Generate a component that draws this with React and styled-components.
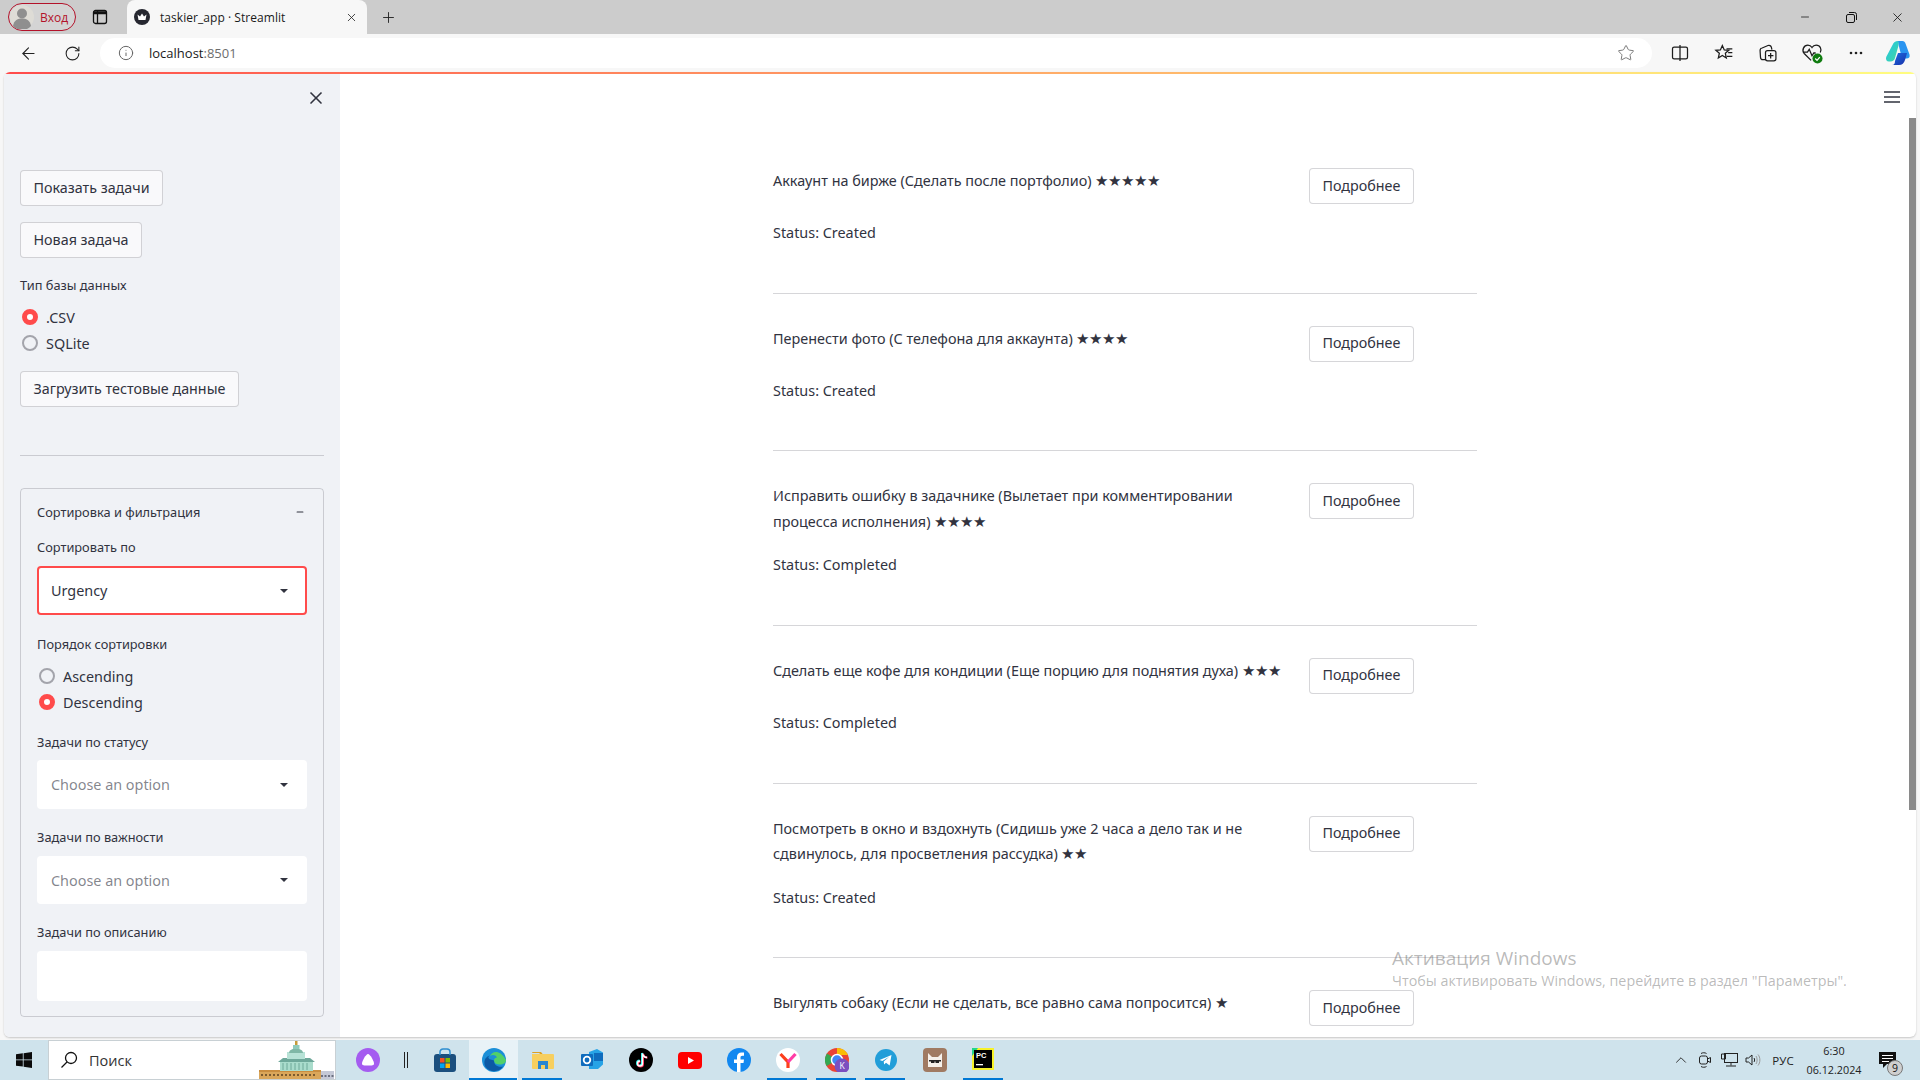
import React from "react";
import styled, { createGlobalStyle } from "styled-components";
import { X, Plus, ArrowLeft, RotateCw, Info, Star, Minus, ChevronUp } from "lucide-react";

const Global = createGlobalStyle`
  html, body { margin: 0; padding: 0; overflow: hidden; }
  body { font-family: "Noto Sans", "Liberation Sans", sans-serif; color: #31333f; }
  * { box-sizing: border-box; }
`;
const Shell = styled.div`position: relative; width: 1920px; height: 1080px; display: flex; flex-direction: column; overflow: hidden; background: #f7f7f7;`;
const TitleBar = styled.div`height: 34px; flex: none; background: #ccc; display: flex; align-items: flex-end; padding-left: 8px;`;
const Profile = styled.div`width: 68px; height: 28px; margin-bottom: 3px; border: 1px solid #b3122a; border-radius: 14px; display: flex; align-items: center; gap: 6px; padding-left: 1px; font: 12px "Open Sans", sans-serif; color: #b3122a; background: #d4d4d4;`;
const Avatar = styled.svg`width: 24px; height: 24px; flex: none;`;
const TabActions = styled.div`width: 51px; height: 34px; display: flex; align-items: center; justify-content: center; padding-right: 3px;`;
const Tab = styled.div`width: 240px; height: 34px; background: #f7f7f7; border-radius: 8px 8px 0 0; display: flex; align-items: center; padding: 0 9px 0 7px; font: 12px "Open Sans", sans-serif; color: #1a1a1a;`;
const Favicon = styled.svg`width: 16px; height: 16px; flex: none; margin-right: 10px;`;
const TabTitle = styled.span`flex: 1; letter-spacing: .05px;`;
const NewTab = styled.div`width: 42px; height: 34px; display: flex; align-items: center; justify-content: center;`;
const Spring = styled.div`flex: 1;`;
const WinControls = styled.div`display: flex; height: 34px; align-items: center;`;
const WinBtn = styled.div`width: 46px; height: 34px; display: flex; align-items: center; justify-content: center;`;

const Toolbar = styled.div`height: 38px; flex: none; background: #f7f7f7; display: flex; align-items: center; padding-left: 6px;`;
const ToolBtn = styled.div`width: ${p => p.$w || 44}px; height: 32px; display: flex; align-items: center; justify-content: center; flex: none;`;
const Address = styled.div`width: 1552px; height: 30px; margin-left: 6px; margin-right: 6px; background: #fff; border-radius: 15px; display: flex; align-items: center; padding: 0 17px 0 18px; font: 13px "Open Sans", sans-serif; color: #1a1a1a;`;
const Url = styled.span`margin-left: 15px; flex: 1; b { font-weight: 400; color: #6d6d6d; }`;

const Viewport = styled.div`flex: 1; padding: 0 4px 3px 4px; min-height: 0;`;
const Page = styled.div`height: 100%; display: flex; flex-direction: column; background: #fff; border-radius: 6px; overflow: hidden; box-shadow: 0 1px 2px rgba(0,0,0,.2);`;
const Decoration = styled.div`height: 2px; flex: none; background: linear-gradient(90deg, #ff4b4b, #fffd80);`;
const Body = styled.div`position: relative; flex: 1; min-height: 0; display: flex;`;

const Sidebar = styled.aside`width: 336px; flex: none; background: #f0f2f6; padding: 0 16px; display: flex; flex-direction: column; overflow: hidden;`;
const SideHead = styled.div`height: 96px; flex: none; display: flex; justify-content: flex-end; padding-top: 14px; margin-right: -2px;`;
const StButton = styled.div`display: inline-flex; align-self: flex-start; align-items: center; height: 36px; padding: 0 12.5px 2px; flex: none; border: 1px solid rgba(49,51,63,.2); border-radius: 4px; background: ${p => p.$plain ? "#fff" : "#f9f9fb"}; font-size: 14.3px; white-space: nowrap; margin-top: ${p => p.$mt || 0}px;`;
const FieldLabel = styled.div`font-size: 12.8px; line-height: 20px; height: 20px; flex: none; margin-top: ${p => p.$mt || 0}px; white-space: nowrap;`;
const RadioGroup = styled.div`flex: none; margin-top: ${p => p.$mt || 0}px; display: flex; flex-direction: column;`;
const RadioRow = styled.div`height: 26px; display: flex; align-items: center; gap: 8px; padding-left: 2px; font-size: 14.4px;`;
const Dot = styled.span`width: 16px; height: 16px; border-radius: 50%; flex: none; background: ${p => p.$on ? "#fff" : "#f0f2f6"}; border: ${p => p.$on ? "5px solid #ff4b4b" : "2px solid #a3a4ab"};`;
const Rule = styled.div`height: 1px; flex: none; background: rgba(49,51,63,.2); margin-top: ${p => p.$mt || 0}px;`;
const Expander = styled.section`height: 529px; flex: none; margin-top: 32px; border: 1px solid rgba(49,51,63,.2); border-radius: 4px; padding: 0 16px; display: flex; flex-direction: column; overflow: hidden;`;
const ExpHead = styled.div`height: 46px; flex: none; display: flex; align-items: center; justify-content: space-between; font-size: 12.8px; padding-right: 2px;`;
const Select = styled.div`height: ${p => p.$h || 49}px; flex: none; margin-top: ${p => p.$mt ?? 9}px; background: #fff; border-radius: 4px; border: ${p => p.$focus ? "2px solid #ff4b4b" : "none"}; display: flex; align-items: center; justify-content: space-between; padding: 0 ${p => p.$focus ? 17 : 19}px 0 ${p => p.$focus ? 12 : 14}px; font-size: 14.4px; color: ${p => p.$muted ? "rgba(49,51,63,.6)" : "#31333f"};`;
const Caret = styled.span`width: 0; height: 0; border-left: 4px solid transparent; border-right: 4px solid transparent; border-top: 4px solid #31333f;`;
const TextBox = styled.div`height: 50px; flex: none; margin-top: 9px; background: #fff; border-radius: 4px;`;

const Main = styled.main`flex: 1; min-width: 0; padding: 94px 0 0 433px; overflow: hidden;`;
const List = styled.div`width: 704px; display: flex; flex-direction: column;`;
const Item = styled.article`display: flex; flex-direction: column; gap: 16px; flex: none;`;
const ItemTop = styled.div`display: grid; grid-template-columns: 536px auto; justify-content: start;`;
const ItemText = styled.p`margin: 0; padding-bottom: 2px; font-size: 14.4px; line-height: 25.6px; white-space: nowrap;`;
const Stars = styled.span`font-size: 15px;`;
const StatusLine = styled.p`margin: 0; font-size: 14.4px; line-height: 25.6px;`;
const Divider = styled.hr`height: 1px; margin: 47px 0 32px; border: none; background: rgba(49,51,63,.2); flex: none;`;
const Burger = styled.svg`position: absolute; top: 16px; right: 15px; width: 18px; height: 14px;`;
const ScrollThumb = styled.div`position: absolute; right: 0; top: 44px; width: 7px; height: 692px; background: #8a8a8a;`;

const Taskbar = styled.footer`height: 40px; flex: none; background: #cfe3ec; display: flex; align-items: center;`;
const Start = styled.div`width: 48px; height: 40px; display: flex; align-items: center; justify-content: center;`;
const SearchBox = styled.div`width: 288px; height: 40px; background: #fff; border: 1px solid #c8d0d4; display: flex; align-items: center; padding-left: 11px; gap: 11px; font: 14.5px "Open Sans", sans-serif; color: #333; overflow: hidden;`;
const SearchArt = styled.svg`margin-left: auto; width: 76px; height: 39px; flex: none;`;
const Slots = styled.div`display: flex; margin-left: 7px;`;
const Slot = styled.div`position: relative; width: ${p => p.$w || 49}px; height: 40px; display: flex; align-items: center; justify-content: center; flex: none; background: ${p => p.$active ? "#e8f2f7" : "transparent"}; &::after { content: ""; position: absolute; bottom: 0; left: ${p => p.$active ? 0 : 4}px; right: ${p => p.$active ? 1 : 5}px; height: 2px; background: ${p => p.$run || p.$active ? "#0078d4" : "transparent"}; }`;
const Tray = styled.div`margin-left: auto; display: flex; align-items: center; height: 40px; padding-right: 15px; font: 12px "Open Sans", sans-serif; color: #222;`;
const TrayIcon = styled.div`width: ${p => p.$w || 24}px; height: 40px; display: flex; align-items: center; justify-content: center; flex: none;`;
const Lang = styled.div`width: 38px; text-align: center; font-size: 11.5px; margin-left: -1px;`;
const Clock = styled.div`width: 62px; margin-left: 1px; text-align: center; line-height: 19px; font-size: 10.8px;`;
const Notify = styled.div`position: relative; width: 36px; height: 40px; margin-left: 4px; display: flex; align-items: center; justify-content: center;`;
const Badge = styled.span`position: absolute; left: 18px; top: 20px; width: 16px; height: 16px; border-radius: 50%; background: #cfcfcf; border: 1px solid #777; font-size: 10.5px; line-height: 14px; text-align: center; color: #111;`;
const Watermark = styled.div`position: absolute; left: 1392px; top: 945px; font-family: "Open Sans", sans-serif; color: rgba(90,90,90,.42); pointer-events: none; white-space: nowrap;`;
const WmTitle = styled.div`font-size: 19px; line-height: 27px;`;
const WmSub = styled.div`font-size: 14.3px; line-height: 18px;`;

const Ic = ({ s = 20, children, ...r }) => <svg width={s} height={s} viewBox="0 0 24 24" fill="none" stroke="#1c1c1c" strokeWidth="1.5" {...r}>{children}</svg>;

const Split = () => <Ic><rect x="3" y="5" width="18" height="14" rx="2"/><path d="M12 2.5v19"/></Ic>;
const Favs = () => <Ic><path d="M10 3l2.3 5.3 5.5.5-4.2 3.6 1.2 5.6L10 15l-4.8 3 1.2-5.6-4.2-3.6 5.5-.5z"/><path d="M15 7h7M17 11.5h5M15.5 16h6.5"/></Ic>;
const Coll = () => <Ic><path d="M9 20H6a3 3 0 0 1-3-3l-.5-8A3 3 0 0 1 5 6l7-3a3 3 0 0 1 4 2l.7 3"/><rect x="9" y="9" width="12.5" height="12.5" rx="2.5" fill="#f7f7f7"/><path d="M15.2 12v6.5M12 15.2h6.5"/></Ic>;
const Health = () => <svg width="22" height="22" viewBox="0 0 24 24" fill="none" stroke="#1c1c1c" strokeWidth="1.4"><path d="M11 20L3.5 12.5C.5 9 3 3.5 7.5 3.5c2 0 3.5 1 4.5 2.5 1-1.5 2.5-2.5 4.5-2.5 4.5 0 6.5 4.5 4.5 8"/><path d="M2 11h5l2-3 3 7 2-3h2"/><circle cx="18" cy="18" r="5.5" fill="#107c10" stroke="none"/><path d="M15.5 18l2 2 3-3.5" stroke="#fff"/></svg>;
const Copilot = () => <svg width="26" height="26" viewBox="0 0 26 26"><defs><linearGradient id="cpa" x1="0" y1="0" x2="1" y2="1"><stop offset="0" stopColor="#21c6e8"/><stop offset="1" stopColor="#43d6a0"/></linearGradient><linearGradient id="cpb" x1="0" y1="0" x2="1" y2="1"><stop offset="0" stopColor="#1c6fe4"/><stop offset="1" stopColor="#1a2fa8"/></linearGradient></defs><path d="M13 1h4.5c1.5 0 2.5 1 3 2.5l4 11c.7 2.5-.5 4-3 4H17l-3-12C13.5 4 13 2 13 1z" fill="#2a94f0"/><path d="M7.5 5C8.5 2.5 10.5 1 13 1c1 1 .7 3 .4 5L10 18c-.6 2-2 3.5-4.5 3.5H4C1.5 21.5.5 19.5 1.2 17z" fill="url(#cpa)"/><path d="M10 21l3-8h9l-2 7c-.8 3-3 5-6 5H7c2.5 0 3-2 3-4z" fill="url(#cpb)"/></svg>;

const Building = () => (
  <SearchArt viewBox="0 0 76 39">
    <rect x="0" y="30" width="62" height="9" fill="#d9a65a"/>
    <rect x="0" y="29" width="62" height="2" fill="#c98d3f"/>
    <path d="M2 34h56" stroke="#7a5a30" strokeDasharray="2 2" strokeWidth="2"/>
    <rect x="62" y="30" width="13" height="9" fill="#c5c9d6"/>
    <path d="M62 35h13" stroke="#6c7080" strokeDasharray="2 1.5" strokeWidth="2"/>
    <rect x="21" y="20" width="33" height="10" fill="#a9dccc"/>
    <path d="M19 21h37l-5-4H24z" fill="#6ea89a"/>
    <rect x="28" y="11" width="18" height="7" fill="#b7e2d6"/>
    <path d="M30 12c0-6 14-6 14 0z" fill="#7fb7a6"/>
    <rect x="36" y="0" width="2.5" height="5" fill="#c69b3a"/>
    <rect x="34" y="4" width="6.5" height="4" fill="#8fcabb"/>
    <path d="M24 22v7M28 22v7M32 22v7M36 22v7M40 22v7M44 22v7M48 22v7" stroke="#5f9c8e" strokeWidth=".8"/>
  </SearchArt>
);
const T = ({ s = 24, children }) => <svg width={s} height={s} viewBox="0 0 24 24">{children}</svg>;

const Items = [
  { lines: ["Аккаунт на бирже (Сделать после портфолио) "], stars: "★★★★★", status: "Created" },
  { lines: ["Перенести фото (С телефона для аккаунта) "], stars: "★★★★", status: "Created" },
  { lines: ["Исправить ошибку в задачнике (Вылетает при комментировании", "процесса исполнения) "], stars: "★★★★", status: "Completed" },
  { lines: ["Сделать еще кофе для кондиции (Еще порцию для поднятия духа) "], stars: "★★★", status: "Completed" },
  { lines: ["Посмотреть в окно и вздохнуть (Сидишь уже 2 часа а дело так и не", "сдвинулось, для просветления рассудка) "], stars: "★★", status: "Created" },
  { lines: ["Выгулять собаку (Если не сделать, все равно сама попросится) "], stars: "★" },
];

export default function App() {
  return (
    <Shell>
      <Global />
      <TitleBar>
        <Profile>
          <Avatar viewBox="0 0 24 24"><circle cx="12" cy="12" r="12" fill="#dedcd6"/><circle cx="12" cy="8.5" r="5" fill="#8f8f8f"/><path d="M3 21c1-6 5-7.5 9-7.5s8 1.5 9 7.5a12 12 0 0 1-18 0z" fill="#8f8f8f"/></Avatar>
          Вход
        </Profile>
        <TabActions>
          <svg width="16" height="16" viewBox="0 0 16 16" fill="none" stroke="#111" strokeWidth="1.3"><rect x="1.5" y="1.5" width="13" height="13" rx="2"/><path d="M5.5 2v12"/><path d="M2 3h12v1.5H2z" fill="#111"/></svg>
        </TabActions>
        <Tab>
          <Favicon viewBox="0 0 16 16"><circle cx="8" cy="8" r="8" fill="#262730"/><path d="M3.5 5.5l2.5 2L8 4.5l2 3 2.5-2-1 5.5h-7z" fill="#fff"/></Favicon>
          <TabTitle>taskier_app · Streamlit</TabTitle>
          <X size={13} color="#222" strokeWidth={1.5} />
        </Tab>
        <NewTab><Plus size={17} color="#222" strokeWidth={1.3} /></NewTab>
        <Spring />
        <WinControls>
          <WinBtn><Minus size={12} color="#111" strokeWidth={1.5} /></WinBtn>
          <WinBtn><svg width="11" height="11" viewBox="0 0 11 11" fill="none" stroke="#111"><rect x=".5" y="2.5" width="8" height="8" rx="1.5"/><path d="M3 .5h5.5a2 2 0 0 1 2 2V8"/></svg></WinBtn>
          <WinBtn><X size={15} color="#111" strokeWidth={1.3} /></WinBtn>
        </WinControls>
      </TitleBar>

      <Toolbar>
        <ToolBtn><ArrowLeft size={19} color="#222" strokeWidth={1.4} /></ToolBtn>
        <ToolBtn><RotateCw size={17} color="#222" strokeWidth={1.5} /></ToolBtn>
        <Address>
          <Info size={16} color="#666" strokeWidth={1.5} />
          <Url>localhost<b>:8501</b></Url>
          <Star size={18} color="#777" strokeWidth={1.3} />
        </Address>
        <ToolBtn><Split /></ToolBtn>
        <ToolBtn><Favs /></ToolBtn>
        <ToolBtn><Coll /></ToolBtn>
        <ToolBtn><Health /></ToolBtn>
        <ToolBtn><svg width="14" height="4" viewBox="0 0 14 4" fill="#222"><circle cx="2" cy="2" r="1.3"/><circle cx="7" cy="2" r="1.3"/><circle cx="12" cy="2" r="1.3"/></svg></ToolBtn>
        <ToolBtn $w={40}><Copilot /></ToolBtn>
      </Toolbar>

      <Viewport>
        <Page>
          <Decoration />
          <Body>
            <Sidebar>
              <SideHead><X size={20} color="#31333f" strokeWidth={2} /></SideHead>
              <StButton>Показать задачи</StButton>
              <StButton $mt={16}>Новая задача</StButton>
              <FieldLabel $mt={17}>Тип базы данных</FieldLabel>
              <RadioGroup $mt={9}>
                <RadioRow><Dot $on />.CSV</RadioRow>
                <RadioRow><Dot />SQLite</RadioRow>
              </RadioGroup>
              <StButton $mt={15}>Загрузить тестовые данные</StButton>
              <Rule $mt={48} />
              <Expander>
                <ExpHead>Сортировка и фильтрация<Minus size={10} color="#31333f" strokeWidth={2.5} /></ExpHead>
                <FieldLabel $mt={2}>Сортировать по</FieldLabel>
                <Select $focus>Urgency<Caret /></Select>
                <FieldLabel $mt={19}>Порядок сортировки</FieldLabel>
                <RadioGroup $mt={9}>
                  <RadioRow><Dot />Ascending</RadioRow>
                  <RadioRow><Dot $on />Descending</RadioRow>
                </RadioGroup>
                <FieldLabel $mt={17}>Задачи по статусу</FieldLabel>
                <Select $muted $mt={8}>Choose an option<Caret /></Select>
                <FieldLabel $mt={18}>Задачи по важности</FieldLabel>
                <Select $muted $h={48}>Choose an option<Caret /></Select>
                <FieldLabel $mt={18}>Задачи по описанию</FieldLabel>
                <TextBox />
              </Expander>
            </Sidebar>
            <Main>
              <List>
                {Items.map((it, i) => (
                  <React.Fragment key={i}>
                    <Item>
                      <ItemTop>
                        <ItemText>{it.lines.map((l, j) => <React.Fragment key={j}>{j > 0 && <br />}{l}</React.Fragment>)}<Stars>{it.stars}</Stars></ItemText>
                        <StButton $plain>Подробнее</StButton>
                      </ItemTop>
                      {it.status && <StatusLine>Status: {it.status}</StatusLine>}
                    </Item>
                    {it.status && <Divider />}
                  </React.Fragment>
                ))}
              </List>
            </Main>
            <Burger viewBox="0 0 18 14" fill="none" stroke="#31333f" strokeWidth="1.7"><path d="M1 2h16M1 7h16M1 12h16" /></Burger>
            <ScrollThumb />
          </Body>
        </Page>
      </Viewport>

      <Taskbar>
        <Start><svg width="16" height="16" viewBox="0 0 16 16" fill="#0a0a0a"><path d="M0 2.3L6.8 1.3v6.2H0zM7.6 1.2L16 0v7.5H7.6zM0 8.3h6.8v6.3L0 13.7zM7.6 8.3H16V16l-8.4-1.2z"/></svg></Start>
        <SearchBox>
          <svg width="18" height="18" viewBox="0 0 18 18" fill="none" stroke="#111" strokeWidth="1.3"><circle cx="11" cy="7" r="5.5"/><path d="M7 11l-5.5 5.500"/></svg>
          Поиск
          <Building />
        </SearchBox>
        <Slots>
          <Slot><T><circle cx="12" cy="12" r="12" fill="#a45cf0"/><path d="M12 6c2 0 6 7 6 9.5 0 2-2 2-6 2s-6 0-6-2C6 13 10 6 12 6z" fill="#fff"/></T></Slot>
          <Slot $w={28}><svg width="6" height="16" viewBox="0 0 6 16" stroke="#222"><path d="M1.5 0v16M4.5 0v16"/></svg></Slot>
          <Slot><T><rect x="1" y="6" width="22" height="18" rx="3" fill="#1b4f7e"/><path d="M7 7V4a3 3 0 0 1 3-3h4a3 3 0 0 1 3 3v3" fill="none" stroke="#2f8fd0" strokeWidth="1.5"/><rect x="7" y="10" width="4.5" height="4.5" fill="#f25022"/><rect x="12.5" y="10" width="4.5" height="4.5" fill="#7fba00"/><rect x="7" y="15.5" width="4.5" height="4.5" fill="#00a4ef"/><rect x="12.5" y="15.5" width="4.5" height="4.5" fill="#ffb900"/></T></Slot>
          <Slot $active><T><circle cx="12" cy="12" r="12" fill="#1b8fd8"/><path d="M24 12c0 3-3 4.5-6 4.5-4 0-6-1.5-6-4 0-2 1.5-3 3-3-1.5-3-5-3-7-1.5C10 3 18 1 24 12z" fill="#52d069"/><path d="M12 12.5c0 5 4 7 9 6-3 5-12 7-17 1C1 16 2 9 8 7.5c-3 2-2 4 4 5z" fill="#0c59a4"/></T></Slot>
          <Slot $run><T><path d="M1 5a1 1 0 0 1 1-1h8l2 2.5H10L8 5z" fill="#e0a020"/><path d="M1 6h21a1 1 0 0 1 1 1v13a1 1 0 0 1-1 1H2a1 1 0 0 1-1-1z" fill="#f7cf5f"/><path d="M7 13h10v8h-3v-4h-4v4H7z" fill="#2a86d0"/></T></Slot>
          <Slot><T><path d="M9 4l8-3 6 3.5v12L18 21H9z" fill="#27a3e6"/><path d="M14 5h9v8h-9z" fill="#0f6cbd"/><rect x="1" y="6" width="12" height="12" rx="1" fill="#0f6cbd"/><circle cx="7" cy="12" r="3.3" fill="none" stroke="#fff" strokeWidth="1.8"/></T></Slot>
          <Slot><T><circle cx="12" cy="12" r="12" fill="#000"/><path d="M13 5v10a2.5 2.5 0 1 1-2.5-2.5M13 5c.5 2.5 2 4 4.5 4.3" fill="none" stroke="#25f4ee" strokeWidth="2"/><path d="M14 6v10a2.5 2.5 0 1 1-2.5-2.5M14 6c.5 2 2 3.5 4.5 3.8" fill="none" stroke="#fe2c55" strokeWidth="2"/><path d="M13.5 5.5v10a2.5 2.5 0 1 1-2.5-2.5M13.5 5.5c.5 2.2 2 3.8 4.5 4" fill="none" stroke="#fff" strokeWidth="1.4"/></T></Slot>
          <Slot><T><rect x="0" y="4" width="24" height="17" rx="4" fill="#f00"/><path d="M10 9l6 3.5-6 3.5z" fill="#fff"/></T></Slot>
          <Slot><T><circle cx="12" cy="12" r="12" fill="#1288f0"/><path d="M13.5 24v-9h3l.5-3.5h-3.5V9.500c0-1 .5-1.800 2-1.800H17V4.600c-.6-.1-1.500-.2-2.500-.2-2.700 0-4.500 1.600-4.500 4.600v2.500H7V15h3v9z" fill="#fff"/></T></Slot>
          <Slot $run><T><circle cx="12" cy="12" r="12" fill="#fff"/><path d="M4.5 6L12 14v6" fill="none" stroke="#fc3f1d" strokeWidth="3.2"/><path d="M19.5 6L12 14" fill="none" stroke="#ff3ca6" strokeWidth="3.2"/></T></Slot>
          <Slot $run><T><circle cx="12" cy="12" r="12" fill="#ea4335"/><path d="M12 12L1.6 18A12 12 0 0 1 2 5.5z" fill="#34a853"/><path d="M12 0a12 12 0 0 1 11 7H12z" fill="#fbbc05"/><circle cx="12" cy="12" r="5.5" fill="#4285f4" stroke="#fff" strokeWidth="1.5"/><circle cx="17" cy="18" r="7.5" fill="#7b4fbf"/><text x="17" y="21" fontSize="8.5" fill="#fff" textAnchor="middle" fontFamily="Open Sans">K</text></T></Slot>
          <Slot $run><T s={22}><circle cx="12" cy="12" r="12" fill="#229ed9"/><path d="M5 12l13-5.5-2 11.5-4-3-2 2-.5-3.5 6-5-7.5 4.5z" fill="#fff"/></T></Slot>
          <Slot><T><rect x="0" y="0" width="24" height="24" rx="4" fill="#a07a62"/><path d="M5 5l4 4h6l4-4v14H5z" fill="#f5f0ea"/><path d="M6 12h12v1.5H6z" fill="#222"/><path d="M8 13h3.5v2H8zM12.5 13H16v2h-3.500z" fill="#222"/></T></Slot>
          <Slot $run><T><rect x="0" y="0" width="22" height="22" fill="#f7f22a"/><path d="M0 0h6L0 8z" fill="#21d789"/><rect x="2" y="2" width="18" height="18" fill="#000"/><text x="4" y="10" fontSize="7.5" fontWeight="700" fill="#fff" fontFamily="Liberation Sans">PC</text><rect x="4" y="16" width="7" height="1.3" fill="#fff"/></T></Slot>
        </Slots>
        <Tray>
          <TrayIcon><ChevronUp size={18} color="#222" strokeWidth={1.2} /></TrayIcon>
          <TrayIcon><svg width="14" height="18" viewBox="0 0 14 18" fill="none" stroke="#222"><rect x="1.5" y="5" width="8" height="8" rx="2"/><path d="M9.5 8l3-1.5v5l-3-1.5M3 2.5c1.5-1 4-1 5.5 0M3 15.5c1.5 1 4 1 5.5 0"/></svg></TrayIcon>
          <TrayIcon><svg width="17" height="14" viewBox="0 0 17 14" fill="none" stroke="#222"><rect x="3.5" y=".5" width="13" height="9"/><path d="M10 9.5v3M5 13h10M.5 1h4v5h-4z" /></svg></TrayIcon>
          <TrayIcon><svg width="16" height="14" viewBox="0 0 16 14" fill="none" stroke="#222"><path d="M1 5h2.5L7 2v10L3.5 9H1zM9 5c.8 1 .8 3 0 4" /><path d="M11 3c1.5 2 1.5 6 0 8M13 1.5c2.500 3 2.500 8 0 11" stroke="#999"/></svg></TrayIcon>
          <Lang>РУС</Lang>
          <Clock>6:30<br />06.12.2024</Clock>
          <Notify>
            <svg width="17" height="16" viewBox="0 0 17 16"><path d="M0 0h17v12H8l-4 4v-4H0z" fill="#111"/><path d="M3 3.5h11M3 6.5h11M3 9.5h7" stroke="#fff"/></svg>
            <Badge>9</Badge>
          </Notify>
        </Tray>
      </Taskbar>

      <Watermark>
        <WmTitle>Активация Windows</WmTitle>
        <WmSub>Чтобы активировать Windows, перейдите в раздел "Параметры".</WmSub>
      </Watermark>
    </Shell>
  );
}
